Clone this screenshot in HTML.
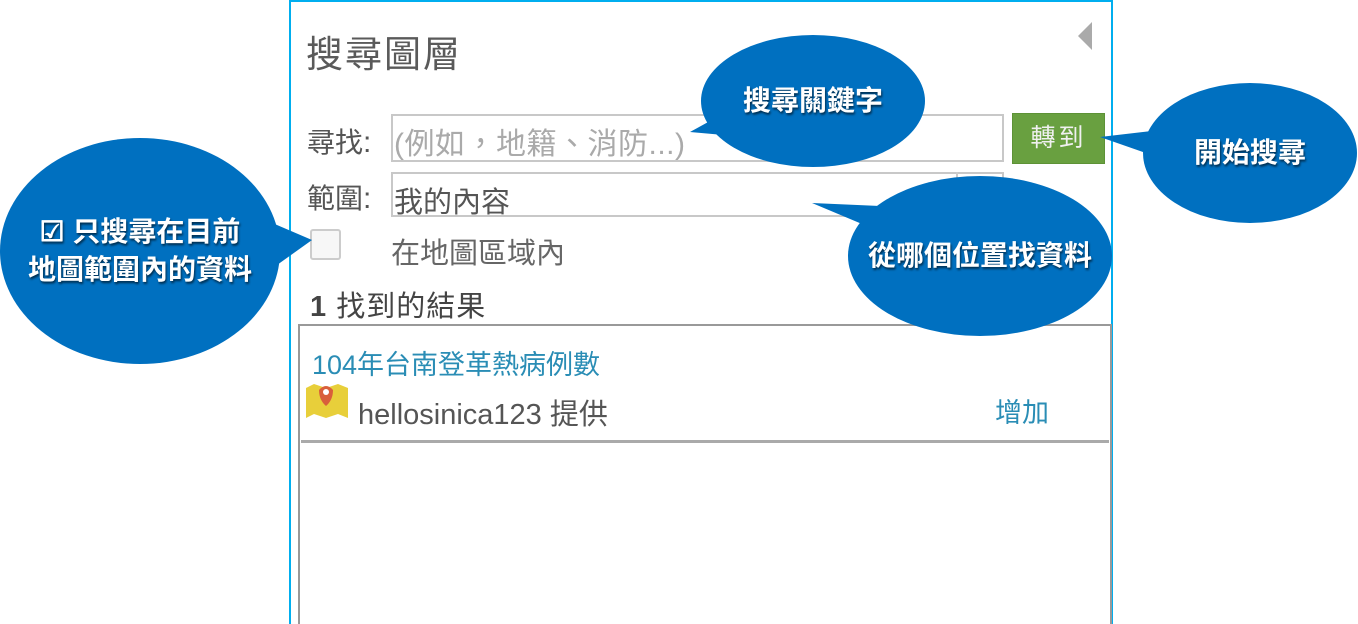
<!DOCTYPE html>
<html><head><meta charset="utf-8"><style>
*{margin:0;padding:0;box-sizing:border-box}
body{width:1358px;height:622px;background:#fff;position:relative;overflow:hidden;font-family:"Liberation Sans","Noto Sans CJK TC",sans-serif}
.a{position:absolute;white-space:nowrap}
.g{color:#555}
.bt{color:#fff;font-weight:bold;font-size:28px;text-shadow:1px 2px 2px rgba(0,0,0,.6);text-align:center;line-height:36px}
</style></head><body>
<div class="a" style="left:289px;top:0;width:824px;height:624px;border:2px solid #00aeef;border-bottom:none"></div>
<div class="a g" style="left:306px;top:24px;font-size:37px;color:#5a5a5a;letter-spacing:2px">搜尋圖層</div>
<svg class="a" style="left:1076px;top:20px" width="18" height="32"><polygon points="16,2 16,30 2,16" fill="#aaa"/></svg>
<div class="a g" style="left:307px;top:121px;font-size:28px">尋找<span style="font-size:30px">:</span></div>
<div class="a" style="left:391px;top:114px;width:613px;height:48px;border:2px solid #c8c8c8"></div>
<div class="a" style="left:394px;top:119px;font-size:30px;color:#aaa;letter-spacing:.5px">(例如，地籍、消防...)</div>
<div class="a" style="left:1012px;top:113px;width:93px;height:51px;background:#69a040;border:1px solid #5d9236;font-size:25px;text-align:center;line-height:48px;color:#f0f0f0;letter-spacing:3px">轉到</div>
<div class="a g" style="left:307px;top:177px;font-size:28px">範圍<span style="font-size:30px">:</span></div>
<div class="a" style="left:391px;top:172px;width:613px;height:45px;border:2px solid #c8c8c8"></div>
<div class="a" style="left:956px;top:172px;width:2px;height:45px;background:#ccc"></div>
<div class="a" style="left:394px;top:179px;font-size:29px;color:#555">我的內容</div>
<div class="a" style="left:310px;top:229px;width:31px;height:31px;border:2px solid #ccc;border-radius:3px;background:#f7f7f7"></div>
<div class="a g" style="left:391px;top:230px;font-size:29px;color:#666">在地圖區域內</div>
<div class="a" style="left:310px;top:283px;font-size:29px;color:#444;letter-spacing:1px"><b>1</b> 找到的結果</div>
<div class="a" style="left:298px;top:324px;width:814px;height:300px;border:2px solid #999;border-bottom:none"></div>
<div class="a" style="left:312px;top:343px;font-size:27px;color:#2a8db5">104年台南登革熱病例數</div>
<svg class="a" style="left:304px;top:382px" width="46" height="40"><path d="M2 6 L10 2 L22 6 L34 2 L44 6 L44 36 L34 32 L22 36 L10 32 L2 36Z" fill="#e8cf3a"/><path d="M15 8 Q22 0 29 8 Q29 18 22 24 Q15 18 15 8Z" fill="#d95f3b"/><circle cx="22" cy="10" r="3" fill="#fff"/></svg>
<div class="a g" style="left:358px;top:391px;font-size:29px">hellosinica123 提供</div>
<div class="a" style="left:995px;top:391px;font-size:27px;color:#2a8db5">增加</div>
<div class="a" style="left:301px;top:440px;width:808px;height:3px;background:#aaa"></div>
<svg class="a" style="left:0;top:0" width="1358" height="622">
<g fill="#0070c0">
<ellipse cx="813" cy="101" rx="112" ry="66"/><polygon points="730,110 690,132 780,140"/>
<ellipse cx="1250" cy="153" rx="107" ry="70"/><polygon points="1160,130 1100,137 1160,158"/>
<ellipse cx="980" cy="256" rx="132" ry="80"/><polygon points="812,203 880,206 900,240"/>
<ellipse cx="140" cy="251" rx="140" ry="113"/><polygon points="270,222 312,240 270,270"/>
</g></svg>
<div class="a bt" style="left:701px;top:83px;width:224px">搜尋關鍵字</div>
<div class="a bt" style="left:1143px;top:135px;width:214px">開始搜尋</div>
<div class="a bt" style="left:848px;top:238px;width:264px">從哪個位置找資料</div>
<div class="a bt" style="left:0;top:213px;width:280px;line-height:38px">☑ 只搜尋在目前<br>地圖範圍內的資料</div>
</body></html>
